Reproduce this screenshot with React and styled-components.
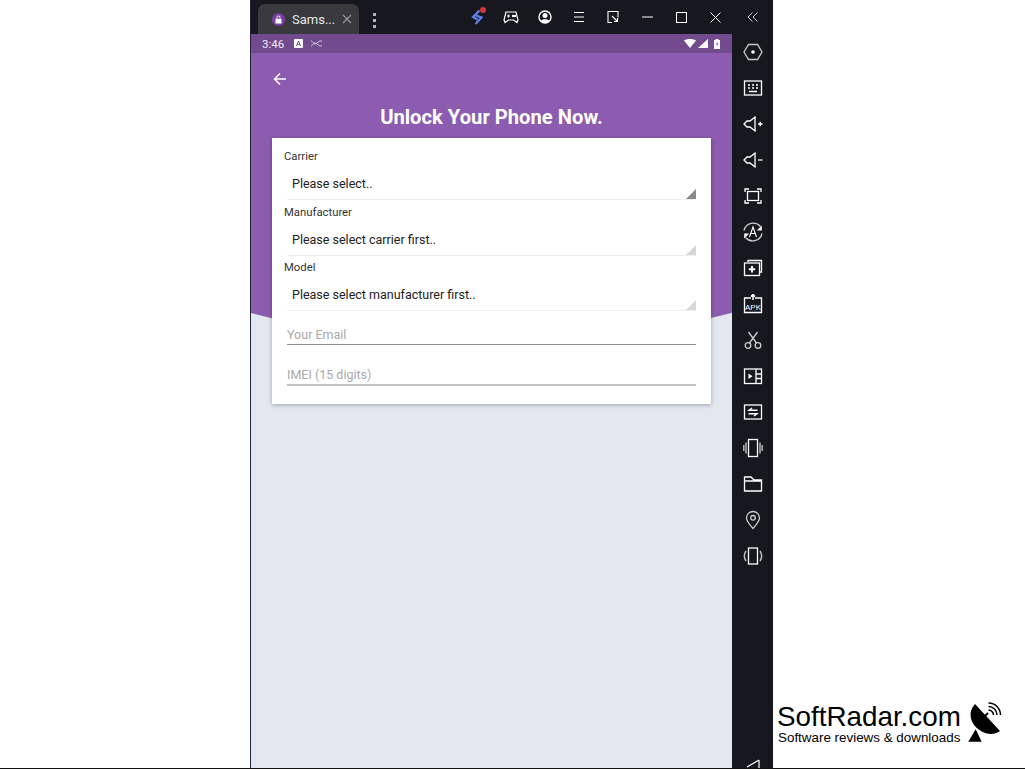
import React from 'react';
import styled, { createGlobalStyle } from 'styled-components';

const Global = createGlobalStyle`
  html, body { margin: 0; padding: 0; background: #fff; }
  body { font-family: Roboto, "Liberation Sans", sans-serif; overflow: hidden; }
`;

const Page = styled.div`
  width: 1025px;
  height: 769px;
  display: flex;
  position: relative;
  overflow: hidden;
  padding-left: 250px;
  box-sizing: border-box;
  background: #fff;
  border-bottom: 1px solid #111;
`;

const Window = styled.div`
  width: 523px;
  height: 768px;
  border-left: 1px solid #22223a;
  box-sizing: border-box;
  background: #16171f;
  display: grid;
  grid-template-columns: 481px 41px;
  grid-template-rows: 34px 734px;
`;

const TitleBar = styled.div`
  grid-column: 1 / 3;
  display: flex;
  align-items: flex-end;
  padding-left: 7px;
  color: #fff;
`;

const Tab = styled.div`
  width: 101px;
  height: 30px;
  background: #3a3a3e;
  border-radius: 7px 7px 0 0;
  display: flex;
  align-items: center;
  padding-left: 14px;
  box-sizing: border-box;
  font-size: 13px;
  color: #e6e6e8;
  gap: 7px;
`;

const TabIcon = styled.span`
  width: 13px;
  height: 13px;
  border-radius: 50%;
  background: #7a3ea3;
  display: flex;
  align-items: center;
  justify-content: center;
`;

const Dots = styled.div`
  margin: 0 0 5px 14px;
  display: flex;
  flex-direction: column;
  gap: 3px;
  height: 16px;
  span { width: 3px; height: 3px; background: #b5b5b5; }
`;

const TopIcons = styled.div`
  margin-left: auto;
  height: 34px;
  display: flex;
  align-items: center;
`;

const TopIcon = styled.div`
  width: ${p => p.$w || 34}px;
  height: 34px;
  display: flex;
  align-items: center;
  justify-content: center;
`;

const Screen = styled.div`
  display: flex;
  flex-direction: column;
  background:
    radial-gradient(circle 960px at 240px -650px, #8c5cb0 99.9%, transparent 100%),
    #e3e7f0;
`;

const StatusBar = styled.div`
  height: 19px;
  background: #724b8f;
  display: flex;
  align-items: center;
  padding: 0 12px 0 11px;
  color: #f2edf6;
  font-size: 11.5px;
`;

const StatusTime = styled.span`
  margin-right: 10px;
`;

const StatusWave = styled.svg`
  margin-left: 8px;
`;

const StatusRight = styled.div`
  margin-left: auto;
  display: flex;
  align-items: center;
  gap: 2px;
`;

const StatusBattery = styled.svg`
  margin-left: 4px;
`;

const BackRow = styled.div`
  height: 52px;
  padding-left: 21px;
  display: flex;
  align-items: center;
`;

const Title = styled.h1`
  margin: 0;
  height: 33px;
  line-height: 24px;
  text-align: center;
  font-size: 20.2px;
  font-weight: 700;
  color: #fff;
`;

const Card = styled.div`
  margin: 0 21px;
  height: 266px;
  background: #fff;
  box-shadow: 0 1px 4px rgba(0, 0, 0, 0.3);
  box-sizing: border-box;
  padding: 12px 15px 0 12px;
`;

const SelectField = styled.div`
  height: 55.7px;
`;

const Label = styled.div`
  font-size: 11.3px;
  line-height: 13px;
  color: #333;
`;

const SelectBox = styled.div`
  height: 37px;
  box-sizing: border-box;
  margin-left: 3px;
  padding: 5px 0 0 5px;
  border-bottom: 1px solid #eee;
  position: relative;
  display: flex;
  align-items: center;
  font-size: 12.5px;
  color: #222;
  &::after {
    content: '';
    position: absolute;
    right: 0;
    bottom: 0;
    border-style: solid;
    border-width: 0 0 10px 10px;
    border-color: transparent transparent ${p => (p.$active ? '#8a8a8a' : '#d8d8d8')} transparent;
  }
`;

const TextField = styled.div`
  margin-left: 3px;
  box-sizing: border-box;
  height: ${p => (p.$first ? '23px' : '25px')};
  margin-top: ${p => (p.$first ? '5px' : '16px')};
  border-bottom: ${p => (p.$first ? '1px solid #8f8f8f' : '2px solid #c4c4c4')};
  font-size: 12.5px;
  line-height: ${p => (p.$first ? '26px' : '28px')};
  color: #aaa;
`;

const SideBar = styled.div`
  display: flex;
  flex-direction: column;
  align-items: center;
  overflow: hidden;
`;

const SideIcon = styled.div`
  width: 41px;
  height: 36px;
  flex: none;
  display: flex;
  align-items: center;
  justify-content: center;
`;

const SideBottom = styled.div`
  margin-top: auto;
  height: 9px;
  display: flex;
  justify-content: center;
  align-items: flex-start;
`;

const ApkText = styled.text`
  font-family: "Liberation Sans", sans-serif;
  font-size: 8px;
  fill: #fff;
  stroke: none;
  text-anchor: middle;
`;

const Watermark = styled.div`
  position: absolute;
  left: 777px;
  top: 702px;
  width: 230px;
  color: #000;
  font-family: "Liberation Sans", Arial, sans-serif;
`;

const MarkName = styled.div`
  font-size: 27.8px;
  line-height: 30px;
`;

const MarkTag = styled.div`
  margin: -1px 0 0 1px;
  font-size: 13.4px;
  line-height: 14px;
  white-space: nowrap;
`;

const MarkDish = styled.svg`
  position: absolute;
  left: 190px;
  top: 0;
`;

const W = { fill: 'none', stroke: '#fff', strokeWidth: 1.3 };

const Ico = ({ size = 20, children }) => (
  <svg width={size} height={size} viewBox="0 0 20 20" {...W}>{children}</svg>
);

const sideIcons = [
  <><path d="M5.500 2.500h9L19 10l-4.500 7.500h-9L1 10z" stroke="#ccc" /><circle cx="10" cy="10" r="1.800" fill="#fff" stroke="none" /></>,
  <><rect x="1.500" y="3" width="17" height="14" /><path d="M5 7h2M9 7h2M13 7h2M5 10h2M9 10h2M13 10h2M6 13.500h8" strokeWidth="1.500" /></>,
  <><path d="M1 10l3-3h3l5-4v14l-5-4H4z" /><path d="M15 10h4.500M17.200 7.800v4.400" /></>,
  <><path d="M1 10l3-3h3l5-4v14l-5-4H4z" /><path d="M15 10h4.500" /></>,
  <><path d="M2 6V3h4M14 3h4v3M18 14v3h-4M6 17H2v-3" /><rect x="4.500" y="5.500" width="11" height="9" /></>,
  <><path d="M1 8.500A9.500 9.500 0 0 1 17.500 4.500M19 11.500A9.500 9.500 0 0 1 2.500 15.500" stroke="#ccc" /><path d="M18.800 3.500v5h-5zM1.200 16.500v-5h5z" fill="#fff" stroke="none" /><path d="M6.500 15l3.500-10 3.500 10M7.800 11.500h4.400" strokeWidth="1.100" /></>,
  <><path d="M5 4V2.500h13.500V14H17" /><rect x="1.500" y="5" width="15" height="12.500" /><path d="M9 8v6.500M5.800 11.200h6.400" strokeWidth="2" /></>,
  <><path d="M8 4H1.500v14.500h17V4H12" /><path d="M10 6V.5M8 2.500l2-2 2 2" strokeWidth="1.500" /><ApkText x="10" y="15.500">APK</ApkText></>,
  <><circle cx="5" cy="15.500" r="2.800" stroke="#ccc" /><circle cx="15" cy="15.500" r="2.800" stroke="#ccc" /><path d="M6.500 13L14.500 2M13.500 13L5.500 2" stroke="#ccc" /></>,
  <><rect x="1.500" y="3" width="17" height="14.500" /><path d="M13 3v14.500M13 8h5.500M13 12.500h5.500" /><path d="M5.500 7.500l4 2.700-4 2.700z" fill="#fff" stroke="none" /></>,
  <><rect x="1.500" y="3" width="17" height="14" /><path d="M9 6L6 8.300h8.500M11 14l3-2.300H5.500" strokeWidth="1.400" /></>,
  <><rect x="5.500" y="1.500" width="9" height="17" /><path d="M3 4.500v11M17 4.500v11M.8 7v6M19.200 7v6" stroke="#ccc" /></>,
  <path d="M1.500 17V3h6.500l3 3h7.500v11zM1.500 7h17" />,
  <><path d="M10 18.500C6 14 3.500 11 3.500 8a6.500 6.500 0 0 1 13 0c0 3-2.500 6-6.500 10.500z" stroke="#ccc" /><circle cx="10" cy="7.800" r="2.300" stroke="#ccc" /></>,
  <><rect x="5.500" y="2" width="9" height="16" /><path d="M3 5a9 9 0 0 0 0 10M17 15a9 9 0 0 0 0-10" strokeWidth="1.500" stroke="#bbb" /></>,
];

const Select = ({ label, value, active }) => (
  <SelectField>
    <Label>{label}</Label>
    <SelectBox $active={active}>{value}</SelectBox>
  </SelectField>
);

const App = () => (
  <Page>
    <Global />
    <Window>
      <TitleBar>
        <Tab>
          <TabIcon>
            <svg width="9" height="9" viewBox="0 0 9 9">
              <path d="M1.500 4h6v4.500h-6z" fill="#fff" />
              <path d="M3 4V2.500a1.500 1.500 0 0 1 3 0V4" fill="none" stroke="#fff" />
            </svg>
          </TabIcon>
          Sams...
          <svg width="10" height="10" viewBox="0 0 10 10">
            <path d="M1 1l8 8M9 1l-8 8" stroke="#9a9a9a" strokeWidth="1.100" />
          </svg>
        </Tab>
        <Dots><span /><span /><span /></Dots>
        <TopIcons>
          <TopIcon>
            <svg width="18" height="20" viewBox="0 0 18 20">
              <path d="M11.500 3.500L5 10l4.500 2.500M8 8.500l5.500 2L7.500 17" fill="none" stroke="#5f84e8" strokeWidth="2.200" />
              <circle cx="15" cy="3" r="3" fill="#d8343c" />
            </svg>
          </TopIcon>
          <TopIcon>
            <svg width="16" height="14" viewBox="0 0 16 14" fill="none" stroke="#fff" strokeWidth="1.200">
              <path d="M3 2h10l2 8-1 2.500-3.500-2.500h-5L2 12.500 1 10z" />
              <path d="M4 6h3M5.500 4.500v3" />
              <circle cx="10" cy="6" r=".6" fill="#fff" />
              <circle cx="12" cy="6" r=".6" fill="#fff" />
            </svg>
          </TopIcon>
          <TopIcon>
            <svg width="14" height="14" viewBox="0 0 14 14">
              <circle cx="7" cy="7" r="6" fill="none" stroke="#fff" strokeWidth="1.400" />
              <circle cx="7" cy="5.500" r="2.500" fill="#fff" />
              <path d="M2.500 11c1.500-2.500 7.500-2.500 9 0-2 2.500-7 2.500-9 0z" fill="#fff" />
            </svg>
          </TopIcon>
          <TopIcon>
            <svg width="12" height="10" viewBox="0 0 12 10" stroke="#fff" strokeWidth="1">
              <path d="M1 .5h10M1 5h10M1 9.500h10" />
            </svg>
          </TopIcon>
          <TopIcon>
            <svg width="12" height="12" viewBox="0 0 12 12" fill="none" stroke="#fff" strokeWidth="1.100">
              <path d="M5 11.500H1V.5h10v6" />
              <path d="M5 5l5 5M7 10.500h3.500V7" />
            </svg>
          </TopIcon>
          <TopIcon>
            <svg width="11" height="2" viewBox="0 0 11 2"><path d="M0 1h11" stroke="#fff" /></svg>
          </TopIcon>
          <TopIcon>
            <svg width="11" height="11" viewBox="0 0 11 11"><rect x=".5" y=".5" width="10" height="10" fill="none" stroke="#fff" /></svg>
          </TopIcon>
          <TopIcon>
            <svg width="11" height="11" viewBox="0 0 11 11"><path d="M.5.5l10 10M10.500.5l-10 10" stroke="#fff" /></svg>
          </TopIcon>
          <TopIcon $w={41}>
            <svg width="11" height="10" viewBox="0 0 11 10" fill="none" stroke="#ccc" strokeWidth="1">
              <path d="M5.500.5L1 5l4.500 4.500M10.500.5L6 5l4.500 4.500" />
            </svg>
          </TopIcon>
        </TopIcons>
      </TitleBar>
      <Screen>
        <StatusBar>
          <StatusTime>3:46</StatusTime>
          <svg width="9" height="9" viewBox="0 0 9 9">
            <rect width="9" height="9" rx="1" fill="#fff" />
            <path d="M2.500 7L4.500 2l2 5M3.300 5.500h2.400" fill="none" stroke="#724b8f" />
          </svg>
          <StatusWave width="11" height="7" viewBox="0 0 11 7">
            <path d="M0 1c2 0 3 5 5.500 2.500S9 1 11 1M0 6c2 0 3-5 5.500-2.500S9 6 11 6" fill="none" stroke="#ddd" strokeWidth=".9" />
          </StatusWave>
          <StatusRight>
            <svg width="12" height="9" viewBox="0 0 12 9"><path d="M0 1.500C3-.5 9-.5 12 1.500L6 9z" fill="#fff" /></svg>
            <svg width="10" height="9" viewBox="0 0 10 9"><path d="M10 0v9H0z" fill="#fff" /></svg>
            <StatusBattery width="6" height="10" viewBox="0 0 6 10">
              <path d="M0 1h1.500V0h3v1H6v9H0z" fill="#fff" />
              <path d="M3.500 2L2 5.500h1.500L2.500 8.500 4.500 4.500H3z" fill="#724b8f" />
            </StatusBattery>
          </StatusRight>
        </StatusBar>
        <BackRow>
          <svg width="16" height="16" viewBox="0 0 16 16" fill="none" stroke="#fff" strokeWidth="1.500">
            <path d="M14 8H2.500M8 2.500L2.500 8 8 13.500" />
          </svg>
        </BackRow>
        <Title>Unlock Your Phone Now.</Title>
        <Card>
          <Select label="Carrier" value="Please select.." active />
          <Select label="Manufacturer" value="Please select carrier first.." />
          <Select label="Model" value="Please select manufacturer first.." />
          <TextField $first>Your Email</TextField>
          <TextField>IMEI (15 digits)</TextField>
        </Card>
      </Screen>
      <SideBar>
        {sideIcons.map((icon, i) => (
          <SideIcon key={i}><Ico>{icon}</Ico></SideIcon>
        ))}
        <SideBottom>
          <svg width="14" height="9" viewBox="0 0 14 9"><path d="M13 1L1 8M13 1v8" fill="none" stroke="#fff" strokeWidth="1.200" /></svg>
        </SideBottom>
      </SideBar>
    </Window>
    <Watermark>
      <MarkName>SoftRadar.com</MarkName>
      <MarkTag>Software reviews &amp; downloads</MarkTag>
      <MarkDish width="36" height="42" viewBox="0 0 36 42">
        <path d="M8 2L33 29C28 33 20 33 14 29C5 24-1 12 8 2z" fill="#000" />
        <path d="M1.300 39.700L8.700 27.300 14.700 39.700z" fill="#000" />
        <path d="M16 16l5-5" stroke="#000" strokeWidth="2" />
        <path d="M21.500 8a5 5 0 0 1 5 5M21.500 4.500a8.500 8.500 0 0 1 8.500 8.500M21.500 1a12 12 0 0 1 12 12" fill="none" stroke="#000" strokeWidth="1.500" />
      </MarkDish>
    </Watermark>
  </Page>
);

export default App;
